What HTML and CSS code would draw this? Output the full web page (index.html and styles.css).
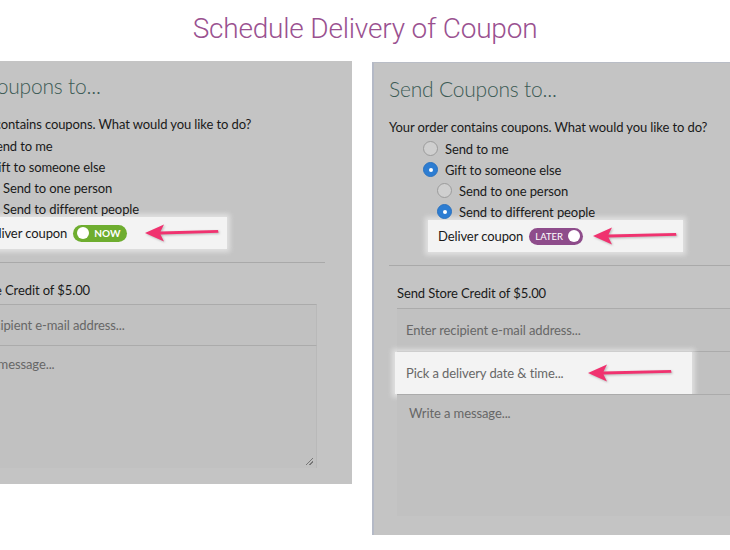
FILE: index.html
```html
<!DOCTYPE html>
<html>
<head>
<meta charset="utf-8">
<link rel="stylesheet" href="styles.css">
</head>
<body>
<h1 class="page-title">Schedule Delivery of Coupon</h1>
<div class="panels">
  <section class="panel panel-left">
    <h2 class="panel-title">Send Coupons to...</h2>
    <p class="question">Your order contains coupons. What would you like to do?</p>
    <div class="option lvl1"><span class="radio"></span>Send to me</div>
    <div class="option lvl1"><span class="radio checked"></span>Gift to someone else</div>
    <div class="option lvl2"><span class="radio"></span>Send to one person</div>
    <div class="option lvl2"><span class="radio checked"></span>Send to different people</div>
    <div class="deliver highlight">
      <span>Deliver coupon</span>
      <span class="toggle toggle-now"><span class="knob"></span>NOW</span>
      <svg class="arrow arrow-short" viewBox="0 0 74 20"><path d="M0 10 L19 1.5 L15.5 8.6 L73 7 L73.5 9.8 L15.5 11.6 L19 18.5 Z"/></svg>
    </div>
    <hr class="sep">
    <div class="credit">Send Store Credit of $5.00</div>
    <div class="field field-email">Enter recipient e-mail address...</div>
    <div class="field textarea">Write a message...<span class="grip"></span></div>
  </section>
  <section class="panel panel-right">
    <h2 class="panel-title">Send Coupons to...</h2>
    <p class="question">Your order contains coupons. What would you like to do?</p>
    <div class="option lvl1"><span class="radio"></span>Send to me</div>
    <div class="option lvl1"><span class="radio checked"></span>Gift to someone else</div>
    <div class="option lvl2"><span class="radio"></span>Send to one person</div>
    <div class="option lvl2"><span class="radio checked"></span>Send to different people</div>
    <div class="deliver highlight">
      <span>Deliver coupon</span>
      <span class="toggle toggle-later">LATER<span class="knob"></span></span>
      <svg class="arrow" viewBox="0 0 84 20"><path d="M0 10 L19 1.5 L15.5 8.6 L83 7 L83.5 9.8 L15.5 11.6 L19 18.5 Z"/></svg>
    </div>
    <hr class="sep">
    <div class="credit">Send Store Credit of $5.00</div>
    <div class="field">Enter recipient e-mail address...</div>
    <div class="field field-date">
      <div class="date-hl highlight">Pick a delivery date &amp; time...
        <svg class="arrow" viewBox="0 0 84 20"><path d="M0 10 L19 1.5 L15.5 8.6 L83 7 L83.5 9.8 L15.5 11.6 L19 18.5 Z"/></svg>
      </div>
    </div>
    <div class="field textarea">Write a message...</div>
  </section>
</div>
</body>
</html>
```

FILE: styles.css
```css
html, body {
  margin: 0;
  padding: 0;
  background: #ffffff;
}
body {
  width: 730px;
  height: 550px;
  overflow: hidden;
  font-family: "Lato", "Open Sans", sans-serif;
  color: #1a1a1a;
}
.page-title {
  margin: 12px 0 0;
  text-align: center;
  font-family: "Roboto", sans-serif;
  font-weight: 300;
  font-size: 28px;
  line-height: 34px;
  color: #9a5190;
  letter-spacing: -0.2px;
}
.panels {
  display: flex;
  align-items: flex-start;
  gap: 20px;
  margin-left: -84px;
  margin-top: 16px;
}
.panel {
  flex: 0 0 auto;
  width: 436px;
  box-sizing: border-box;
  background: #c4c4c4;
  padding: 13px 27px 19px 17px;
}
.panel-left {
  margin-top: -1px;
  padding-top: 12px;
  padding-bottom: 16px;
}
.panel-right {
  border-top: 1px solid #b9bdc6;
  border-left: 2px solid #b4b9c6;
  padding-left: 15px;
}
.panel-title {
  margin: 0 0 15px;
  font-weight: 300;
  font-size: 21px;
  line-height: 26px;
  color: #3c5b55;
  letter-spacing: -0.2px;
}
.question {
  margin: 0;
  font-size: 13px;
  letter-spacing: -0.1px;
  line-height: 21px;
}
.option {
  display: flex;
  align-items: center;
  height: 21px;
  font-size: 13px;
  letter-spacing: -0.1px;
}
.lvl1 { padding-left: 34px; }
.lvl2 { padding-left: 48px; }
.radio {
  width: 13px;
  height: 13px;
  border-radius: 50%;
  border: 1px solid #9b9b9b;
  background: #cfcfcf;
  margin-right: 7px;
  box-sizing: content-box;
  position: relative;
}
.radio.checked {
  background: #2d7dd2;
  border-color: #2a72c0;
}
.radio.checked::after {
  content: "";
  position: absolute;
  left: 4.5px;
  top: 4.5px;
  width: 4px;
  height: 4px;
  border-radius: 50%;
  background: #ffffff;
}
.highlight {
  background: #f3f3f3;
  box-shadow: 0 0 5px 3px rgba(250, 250, 250, 0.55);
}
.deliver {
  display: flex;
  align-items: center;
  height: 32px;
  width: 255px;
  box-sizing: border-box;
  margin: -2px 0 0 39px;
  padding-left: 10px;
  font-size: 13px;
  letter-spacing: -0.1px;
}
.toggle {
  display: flex;
  align-items: center;
  height: 17px;
  width: 54px;
  box-sizing: border-box;
  border-radius: 9px;
  margin-left: 6px;
  color: #ffffff;
  font-size: 10px;
  font-weight: 700;
  letter-spacing: 0;
}
.toggle .knob {
  width: 12px;
  height: 12px;
  border-radius: 50%;
  background: #ffffff;
}
.toggle-now {
  background: #6ead2f;
  padding-left: 4px;
  gap: 5px;
}
.toggle-later {
  background: #8e4c8b;
  padding: 0 3px 0 6px;
  justify-content: space-between;
  font-weight: 400;
  font-size: 9.5px;
}
.arrow {
  width: 84px;
  height: 20px;
  margin-left: 10px;
  fill: #f0326f;
  filter: drop-shadow(1px 1px 1px rgba(0, 0, 0, 0.25));
}
.arrow-short {
  width: 74px;
  margin-left: 18px;
}
.sep {
  margin: 13px 0 0;
  border: 0;
  border-top: 1px solid #a9a9a9;
  height: 0;
}
.credit {
  margin: 17px 0 4px 8px;
  font-size: 13px;
  letter-spacing: -0.1px;
  line-height: 21px;
}
.field {
  margin: 0 8px;
  height: 43px;
  box-sizing: border-box;
  border-top: 1px solid #ababab;
  border-right: 1px solid #b9b9b9;
  background: #c1c1c1;
  padding: 0 9px;
  display: flex;
  align-items: center;
  font-size: 13px;
  letter-spacing: -0.1px;
  color: #676767;
}
.panel-left .credit {
  margin-bottom: 3px;
}
.field-email {
  height: 41px;
}
.field-date {
  padding: 0;
  align-items: stretch;
}
.date-hl {
  width: 297px;
  margin-left: -2px;
  display: flex;
  align-items: center;
  padding-left: 11px;
  box-sizing: border-box;
}
.date-hl .arrow {
  margin-left: 24px;
}
.textarea {
  height: 122px;
  align-items: flex-start;
  padding: 10px 12px;
  position: relative;
}
.panel-left .textarea {
  height: 123px;
}
.grip {
  position: absolute;
  right: 3px;
  bottom: 3px;
  width: 7px;
  height: 7px;
  background: linear-gradient(135deg, transparent 45%, #777 45%, #777 55%, transparent 55%, transparent 70%, #777 70%, #777 80%, transparent 80%);
}
```
